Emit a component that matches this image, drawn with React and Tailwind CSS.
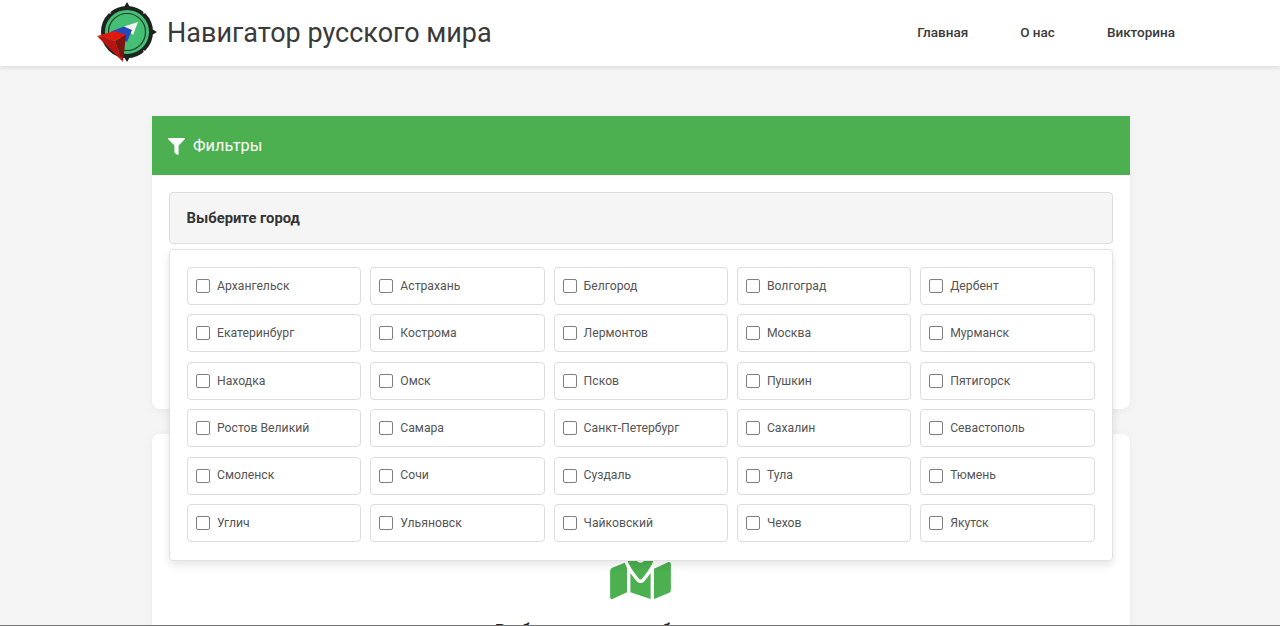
import React from "react";
import { FaFilter, FaMapMarkedAlt } from "react-icons/fa";

const cities = [
  "Архангельск", "Астрахань", "Белгород", "Волгоград", "Дербент",
  "Екатеринбург", "Кострома", "Лермонтов", "Москва", "Мурманск",
  "Находка", "Омск", "Псков", "Пушкин", "Пятигорск",
  "Ростов Великий", "Самара", "Санкт-Петербург", "Сахалин", "Севастополь",
  "Смоленск", "Сочи", "Суздаль", "Тула", "Тюмень",
  "Углич", "Ульяновск", "Чайковский", "Чехов", "Якутск",
];

function Logo() {
  return (
    <svg width="60" height="62" viewBox="0 0 60 62" className="shrink-0">
      {/* стрелки компаса */}
      <path d="M30 0l3.5 6h-7z M60 30l-6 3.5v-7z M30 60l-3.5-6h7z" fill="#1c1c1c" />
      <circle cx="30" cy="30" r="24" fill="#45bf73" stroke="#1d2420" strokeWidth="4" />
      <circle cx="30" cy="30" r="18.5" fill="none" stroke="#1f3a29" strokeWidth="1.2" />
      {/* белые засечки на кольце */}
      <path d="M46.5 11.5l3-3 M46.5 48.5l3 3 M13.5 11.5l-3-3" stroke="#fff" strokeWidth="1.4" />
      {/* стрелка-триколор */}
      <path d="M27 24.5L41 20L36 33z" fill="#f4f4f4" />
      <path d="M14 29.5L27 24.5L35 28L30 40z" fill="#2747bd" />
      <path d="M0 34L18 29L29 33L18 39z" fill="#e0190f" />
      <path d="M0 34L18 39L26 60z" fill="#b81510" />
      <path d="M18 39L29 33L26 60z" fill="#7e1410" />
    </svg>
  );
}

export default function App() {
  return (
    <div className="h-[626px] overflow-hidden relative bg-[#f5f5f5] font-['Roboto',sans-serif] text-[#333]">
      {/* Шапка */}
      <header className="h-[66px] bg-white shadow-[0_2px_5px_rgba(0,0,0,0.1)] flex items-center pl-[97px] pr-[105px]">
        <Logo />
        <div className="ml-[10px] text-[27px] text-[#3a3a3a]">Навигатор русского мира</div>
        <nav className="ml-auto flex gap-[52px] pb-[2px] text-[13.5px] font-medium text-[#3a3a3a]">
          <a>Главная</a>
          <a>О нас</a>
          <a>Викторина</a>
        </nav>
      </header>

      <main className="w-[978px] mt-[50px] ml-[152px]">
        {/* Фильтры */}
        <section className="relative bg-white rounded-b-lg shadow-[0_2px_10px_rgba(0,0,0,0.05)] h-[293px]">
          <div className="h-[59px] bg-[#4caf50] text-white flex items-center pl-4 pt-[2px] text-[16.3px]">
            <FaFilter className="w-[17px] h-[17px] mr-[8px]" />
            <span>Фильтры</span>
          </div>
          <div className="pt-[17px] px-[17px]">
            <div className="h-[52px] bg-[#f5f5f5] border border-[#ddd] rounded flex items-center pl-[16.5px] text-[14.8px] font-bold">
              Выберите город
            </div>
          </div>
          <div className="absolute z-10 left-[17px] right-[17px] top-[133px] h-[312px] bg-white border border-[#e2e2e2] rounded shadow-[0_4px_8px_rgba(0,0,0,0.1)] pt-[17px] pl-[17px] pr-[17.5px]">
            <div className="grid grid-cols-5 gap-x-[9px] gap-y-[9.4px]">
              {cities.map((c) => (
                <label key={c} className="h-[38px] flex items-center bg-white border border-[#ddd] rounded pl-[8px] text-[12.2px] text-[#555]">
                  <span className="w-[14px] h-[14px] border border-[#808080] rounded-[2px] mr-[7px] shrink-0" />
                  {c}
                </label>
              ))}
            </div>
          </div>
        </section>

        {/* Карта */}
        <section className="mt-[25px] bg-white rounded-lg shadow-[0_2px_10px_rgba(0,0,0,0.05)] h-[300px] flex flex-col items-center pt-[111px]">
          <FaMapMarkedAlt className="w-[61px] h-[54px] mr-[2px] text-[#4caf50]" />
          <p className="mt-[18px] text-lg font-medium text-[#222]">Выберите город и объект на карте</p>
        </section>
      </main>
      <div className="absolute bottom-0 left-0 right-0 h-px bg-[#777]" />
    </div>
  );
}
